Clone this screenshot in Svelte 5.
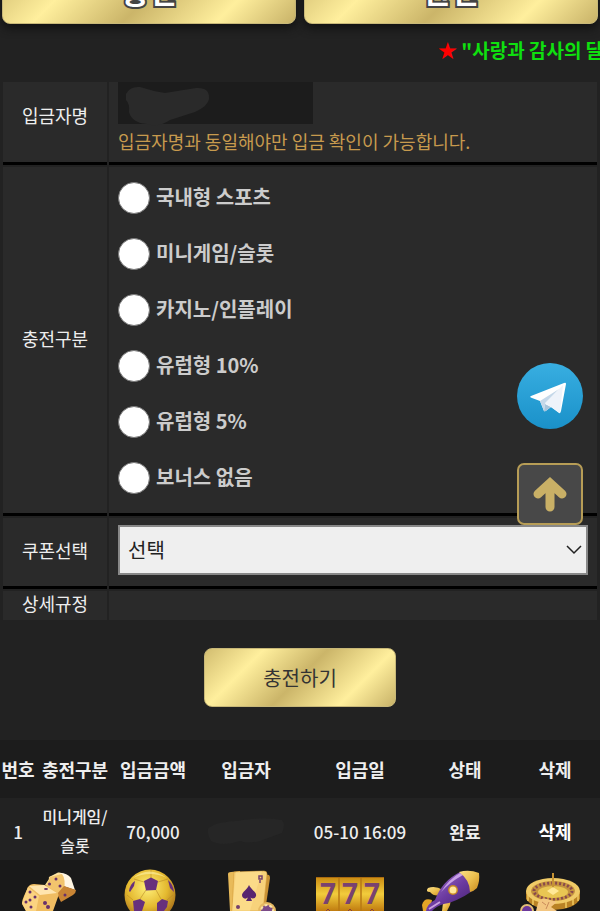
<script>
	const chargeTypes = [
		{ id: 'sports', label: '국내형 스포츠' },
		{ id: 'minigame', label: '미니게임/슬롯' },
		{ id: 'casino', label: '카지노/인플레이' },
		{ id: 'euro10', label: '유럽형 10%' },
		{ id: 'euro5', label: '유럽형 5%' },
		{ id: 'none', label: '보너스 없음' }
	];

	const columns = ['번호', '충전구분', '입금금액', '입금자', '입금일', '상태', '삭제'];

	const deposits = [
		{ no: 1, type: ['미니게임/', '슬롯'], amount: '70,000', date: '05-10 16:09', status: '완료' }
	];

	let chargeType = $state('');
	let coupon = $state('');

	function scrollTop() {
		window.scrollTo({ top: 0, behavior: 'smooth' });
	}
</script>

<main>
	<nav class="tabs">
		<button type="button" class="gold tab">충전</button>
		<button type="button" class="gold tab">환전</button>
	</nav>

	<div class="ticker"><span class="star">★</span> "사랑과 감사의 달"</div>

	<form onsubmit={(e) => e.preventDefault()}>
		<table class="form-table">
			<tbody>
				<tr class="depositor">
					<th><label for="depositor">입금자명</label></th>
					<td>
						<div class="name-box">
							<input id="depositor" type="text" readonly />
							<svg viewBox="0 0 195 46" aria-hidden="true">
								<path d="M8 12Q12 4 22 5Q34 9 47 11L78 6Q92 5 91 17Q90 24 77 30L52 38Q40 46 29 42Q14 41 11 30Q12 22 8 18Z" />
							</svg>
						</div>
						<p class="hint">입금자명과 동일해야만 입금 확인이 가능합니다.</p>
					</td>
				</tr>
				<tr>
					<th>충전구분</th>
					<td class="options">
						{#each chargeTypes as item}
							<label>
								<input type="radio" name="charge" value={item.id} bind:group={chargeType} />
								<span>{item.label}</span>
							</label>
						{/each}
					</td>
				</tr>
				<tr>
					<th><label for="coupon">쿠폰선택</label></th>
					<td class="coupon">
						<div class="select-box">
							<select id="coupon" bind:value={coupon}>
								<option value="">선택</option>
							</select>
							<svg viewBox="0 0 16 10" aria-hidden="true"><path d="M1 1L8 8L15 1" /></svg>
						</div>
					</td>
				</tr>
				<tr class="rules">
					<th>상세규정</th>
					<td></td>
				</tr>
			</tbody>
		</table>
		<button type="submit" class="gold submit">충전하기</button>
	</form>

	<table class="history">
		<thead>
			<tr>
				{#each columns as col}
					<th>{col}</th>
				{/each}
			</tr>
		</thead>
		<tbody>
			{#each deposits as row}
				<tr>
					<td>{row.no}</td>
					<td class="type">{row.type[0]}<br />{row.type[1]}</td>
					<td>{row.amount}</td>
					<td>
						<svg class="smudge" viewBox="0 0 80 28" aria-hidden="true">
							<path d="M2 12Q8 5 30 4Q58 -1 76 3Q80 8 76 16L54 24Q42 27 34 24Q16 30 5 24Q1 18 2 12Z" />
						</svg>
					</td>
					<td>{row.date}</td>
					<td class="strong">{row.status}</td>
					<td><button type="button" class="delete">삭제</button></td>
				</tr>
			{/each}
		</tbody>
	</table>

	<nav class="games">
		<svg viewBox="0 0 100 51" aria-hidden="true">
			<defs>
				<linearGradient id="goldFill" x1="0" y1="0" x2="1" y2="1">
					<stop offset="0" stop-color="#fbe08a" />
					<stop offset="0.5" stop-color="#ecc04f" />
					<stop offset="1" stop-color="#c98a1c" />
				</linearGradient>
				<linearGradient id="purpleFill" x1="0" y1="0" x2="1" y2="1">
					<stop offset="0" stop-color="#a77bd0" />
					<stop offset="0.5" stop-color="#6b3aa0" />
					<stop offset="1" stop-color="#3d1c66" />
				</linearGradient>
				<radialGradient id="ballFill" cx="0.45" cy="0.35" r="0.65">
					<stop offset="0" stop-color="#fff07a" />
					<stop offset="0.6" stop-color="#e4b92f" />
					<stop offset="1" stop-color="#a8701a" />
				</radialGradient>
				<linearGradient id="slotFill" x1="0" y1="0" x2="0" y2="1">
					<stop offset="0" stop-color="#c98a12" />
					<stop offset="0.5" stop-color="#f2cc3c" />
					<stop offset="1" stop-color="#c07c10" />
				</linearGradient>
			</defs>
			<path d="M49 19Q48 17 51 16L58 12.500Q61 12 64 14L69 18L59 29L45 25Z" fill="#ffe3a0" />
			<path d="M60 13Q67 13 71 18L75 30L63 26Q65 18 60 13Z" fill="#fff6e4" />
			<path d="M50 17L62 14Q66 19 64 31L57 34L46 26Z" fill="#f2c46d" />
			<path d="M64 26L76 30Q76 33 73 35L61 42L57 34Z" fill="#c98535" />
			<path d="M28 27Q30 24 34 24L45 25L58 33Q59 35 58 37L53 51H26L22 44Q22 40 24 36Z" fill="#f0bd62" />
			<path d="M29 26L44 25L57 33L40 35Z" fill="#ffe5af" />
			<path d="M28 27L39 36L36 51H26L22 43Z" fill="#fbd381" />
			<g fill="#68306b">
				<circle cx="56" cy="19" r="1.500" /><circle cx="49.500" cy="24" r="1.500" />
				<circle cx="60" cy="26" r="1.500" /><circle cx="65" cy="35" r="1.500" />
				<circle cx="30" cy="32" r="1.500" /><circle cx="35" cy="37" r="1.500" />
				<circle cx="30" cy="40" r="1.500" /><circle cx="26" cy="42" r="1.500" />
				<circle cx="31" cy="47" r="1.500" /><circle cx="45" cy="43" r="2" />
				<circle cx="48" cy="47" r="2" /><ellipse cx="46" cy="29" rx="2" ry="1" />
			</g>
		</svg>
		<svg viewBox="0 0 100 51" aria-hidden="true">
			<circle cx="50" cy="35" r="25.500" fill="url(#ballFill)" />
			<g fill="none" stroke="#b98a25" stroke-width="0.600">
				<path d="M51 18V10M44 22L34 19M58 22L68 19M46 30L40 39M56 30L61 39M33 40L27 35M67 40L73 35" />
			</g>
			<g fill="#67307c">
				<path d="M44 21L51 17.500L58 21L56 30L46 30.500Z" />
				<path d="M33 41L40 39L45 42L42 51H34Z" />
				<path d="M57 43L62 39L68 41L67 47L64 51H57Z" />
				<path d="M29 31Q30 24 35 21L34 26L30 32Z" />
				<path d="M68 20Q73 24 74 32L70 28Z" />
			</g>
			<path d="M33 18Q49 5 67 18Q50 10 33 18Z" fill="#fff3a6" opacity="0.600" />
		</svg>
		<svg viewBox="0 0 100 51" aria-hidden="true">
			<path d="M58 13L69 15Q70 16 70 18L66 45L55 50Z" fill="#c99235" />
			<path d="M28 14Q28 12 31 12L40 11L44 51H30Z" fill="#e8ba59" />
			<path d="M34 12L64 11Q67 11 67 14L63 51H32Z" fill="#f7d27b" stroke="#d59d3b" stroke-width="0.600" />
			<path d="M36 12L62 11L50 51H32Z" fill="#ffe396" opacity="0.500" />
			<path d="M49 25C52 31 57 32 56 36C55 39 52 39 50.500 37.500L52 41H46L48 37.500C45 40 42 38 42 35C42 32 47 30 49 25Z" fill="#57256f" />
			<g fill="none" stroke="#74406d" stroke-width="1.500">
				<rect x="59" y="16" width="3" height="3" /><path d="M60 20V23" />
			</g>
			<circle cx="38" cy="47" r="2" fill="#74406d" />
			<circle cx="67" cy="51" r="9" fill="#e5b862" />
			<circle cx="67" cy="51" r="6" fill="#7b4a87" stroke="#fae4aa" stroke-width="2" stroke-dasharray="3 2" />
		</svg>
		<svg viewBox="0 0 100 51" aria-hidden="true">
			<rect x="16" y="17" width="68" height="34" fill="url(#slotFill)" />
			<path d="M39 17V51M61 17V51" stroke="#b87914" stroke-width="1.500" />
			<path d="M16 17.500H84" stroke="#a96b10" />
			<g class="sevens">
				<text x="28" y="44">7</text>
				<text x="50" y="44">7</text>
				<text x="72" y="44">7</text>
			</g>
			<path d="M26 51L28 49L30 51M48 51L50 49L52 51M70 51L72 49L74 51" stroke="#8a3e3e" fill="none" />
		</svg>
		<svg viewBox="0 0 100 51" aria-hidden="true">
			<path d="M41 35Q34 37 30 32Q25 32 28 28Q35 25 43 30Z" fill="url(#goldFill)" />
			<path d="M32 40Q24 37 22 45L23 51H30Z" fill="#e3a526" />
			<path d="M43 43Q52 36 50 45L47 51H42Z" fill="url(#goldFill)" />
			<path d="M26 51Q27 44 35 40Q42 21 60 12L70 17L77 27Q66 37 49 43Q40 44 34 49L32 51Z" fill="url(#purpleFill)" />
			<path d="M41 32Q49 19 60 13L63 15Q50 22 41 32Z" fill="#c8a0e7" />
			<path d="M59 12Q69 9 79 13Q80 21 77 28Q74 31 70 32Q70 20 59 12Z" fill="url(#goldFill)" />
			<circle cx="53" cy="30" r="5" fill="#c58724" />
			<circle cx="53" cy="30" r="3.500" fill="#ffe59a" />
			<path d="M29 49L40 42" stroke="#c9a0de" stroke-width="2" />
		</svg>
		<svg viewBox="0 0 100 51" aria-hidden="true">
			<path d="M26 31V39Q33 49 53 50Q75 49 80 39V31Z" fill="#b98225" />
			<path d="M28 35V41M33 39V45M40 42V48M66 42V48M73 39V45M78 35V41" stroke="#e3b850" stroke-width="2" />
			<ellipse cx="53" cy="31" rx="27" ry="13" fill="#f0cb67" />
			<ellipse cx="53" cy="31" rx="22" ry="10" fill="#c4933f" />
			<ellipse cx="53" cy="31" rx="19" ry="8" fill="none" stroke="#8a4a4c" stroke-width="3" stroke-dasharray="2 2" />
			<ellipse cx="53" cy="32" rx="15" ry="6" fill="#e9c653" />
			<path d="M53 13V34" stroke="#c69334" stroke-width="2" />
			<path d="M47 31L53 27L59 31L53 35Z" fill="#ffe897" />
			<path d="M38 43Q41 37 47 39L57 42L51 47L57 51H36Z" fill="#f3c681" />
			<path d="M42 42L46 45M49 42L46 49" stroke="#c98a5a" />
			<circle cx="27" cy="51" r="6" fill="#6c379a" stroke="#e1bd76" stroke-width="2" />
		</svg>
	</nav>

	<aside class="floating">
		<a href="#telegram" aria-label="Telegram">
			<svg viewBox="0 0 66 66">
				<defs>
					<linearGradient id="tg" x1="0" y1="0" x2="0" y2="1">
						<stop offset="0" stop-color="#38aee1" />
						<stop offset="1" stop-color="#1a91c9" />
					</linearGradient>
				</defs>
				<circle cx="33" cy="33" r="33" fill="url(#tg)" />
				<path d="M14 33Q12 34 15 35L23 38L27 48Q28 49 30 47L34 44L42 50Q43 51 44 48L49 21Q49 19 47 20Z" fill="#fff" />
				<path d="M23 38L42 26L28 41L27 48Z" fill="#c5d8e9" />
				<path d="M28 41L27 48Q28 49 30 47L34 44Z" fill="#a8c4db" />
				<path d="M28 40L46 22L43 50L34 44Z" fill="#eef3fa" />
			</svg>
		</a>
		<button type="button" class="top" aria-label="맨 위로" onclick={scrollTop}>
			<svg viewBox="0 0 34 36"><path d="M17 31V8M5 18L17 7L29 18" /></svg>
		</button>
	</aside>
</main>

<style>
	:global(body) {
		margin: 0;
		background: #222;
	}

	main {
		display: flex;
		flex-direction: column;
		overflow: hidden;
		background: #222;
		color: #eee;
		font-family: 'Noto Sans CJK KR', sans-serif;
		font-size: 18px;
	}

	button,
	select,
	input {
		font-family: inherit;
		margin: 0;
	}

	.gold {
		border: 1px solid #c8b878;
		border-radius: 8px;
		background: linear-gradient(135deg, #d2bd70 0%, #ffef9d 24%, #cbb569 50%, #ffef9d 77%, #c8b268 100%);
		cursor: pointer;
	}

	/* the tab bar sits half above the scroll edge */
	.tabs {
		display: flex;
		gap: 8px;
		padding: 0 2px;
		margin-top: -32px;
	}

	.tab {
		flex: 1;
		height: 56px;
		padding: 0 0 12px;
		color: #fff;
		font-size: 30px;
		font-weight: 700;
		line-height: 42px;
		box-shadow: 0 4px 10px #111;
		-webkit-text-stroke: 4px #444;
		paint-order: stroke fill;
	}

	.ticker {
		height: 56px;
		padding-left: 73%;
		overflow: hidden;
		white-space: nowrap;
		color: #0fe00f;
		font-size: 19px;
		font-weight: 700;
		line-height: 52px;
	}

	.star {
		color: #f00;
	}

	form {
		display: flex;
		flex-direction: column;
		align-items: center;
	}

	.form-table {
		width: calc(100% - 2px);
		table-layout: fixed;
		border-collapse: separate;
		border-spacing: 2px;
	}

	.form-table th,
	.form-table td {
		background: #2a2a2a;
		border-bottom: 3px solid #000;
		padding: 0;
	}

	.form-table th {
		width: 104px;
		padding-bottom: 4px;
		font-weight: 400;
	}

	.form-table .depositor th {
		padding-bottom: 14px;
	}

	.form-table td {
		padding: 0 9px;
	}

	.name-box {
		position: relative;
		width: 195px;
		height: 42px;
	}

	.name-box input {
		box-sizing: border-box;
		width: 100%;
		height: 42px;
		border: 0;
		background: #1c1c1c;
		color: #eee;
	}

	.name-box svg {
		position: absolute;
		top: 0;
		left: 0;
		width: 195px;
		height: 46px;
		fill: #2a2a2a;
		pointer-events: none;
	}

	.hint {
		margin: 0;
		padding-bottom: 4px;
		color: #c79a4e;
		line-height: 34px;
	}

	.form-table .options {
		padding-top: 3px;
		padding-bottom: 7px;
	}

	.options label {
		display: flex;
		align-items: center;
		gap: 6px;
		height: 56px;
		color: #ccc;
		font-size: 20px;
		font-weight: 700;
	}

	.options span {
		padding-bottom: 4px;
	}

	.options input {
		appearance: none;
		width: 32px;
		height: 32px;
		border: 1px solid #777;
		border-radius: 50%;
		background: #fff;
	}

	.options input:checked {
		background: radial-gradient(#1a73e8 45%, #fff 50%);
	}

	.form-table .coupon {
		padding-top: 7px;
		padding-bottom: 11px;
	}

	.select-box {
		display: grid;
		align-items: center;
	}

	.select-box select,
	.select-box svg {
		grid-area: 1 / 1;
	}

	.select-box select {
		appearance: none;
		width: 100%;
		height: 50px;
		padding: 0 8px 2px;
		border: 2px solid #888;
		border-radius: 0;
		background: #efefef;
		color: #222;
		font-size: 20px;
	}

	.select-box svg {
		justify-self: end;
		width: 16px;
		height: 10px;
		margin-right: 6px;
		fill: none;
		stroke: #222;
		stroke-width: 1.5;
		pointer-events: none;
	}

	.form-table .rules th,
	.form-table .rules td {
		height: 25px;
		border-bottom: 0;
		padding-bottom: 4px;
		line-height: 25px;
	}

	.submit {
		width: 192px;
		height: 59px;
		margin: 26px 0 33px;
		color: #333;
		font-size: 20px;
	}

	.history {
		width: 100%;
		table-layout: fixed;
		border-collapse: collapse;
		text-align: center;
	}

	.history th {
		height: 58px;
		padding: 0;
		background: #1c1c1c;
		font-weight: 700;
		white-space: nowrap;
	}

	.history th:nth-child(1) {
		width: 6%;
	}

	.history th:nth-child(2),
	.history th:nth-child(3) {
		width: 13%;
	}

	.history th:nth-child(4) {
		width: 18%;
	}

	.history th:nth-child(5) {
		width: 20%;
	}

	.history th:nth-child(6),
	.history th:nth-child(7) {
		width: 15%;
	}

	.history td {
		height: 58px;
		padding: 4px 0 0;
		background: #222;
		font-size: 17px;
		font-weight: 500;
		line-height: 29px;
		white-space: nowrap;
	}

	.history .type {
		font-size: 16px;
	}

	.history .strong {
		font-weight: 700;
	}

	.smudge {
		display: block;
		width: 80px;
		height: 28px;
		margin: 0 auto;
		fill: #262626;
	}

	.delete {
		padding: 0;
		border: 0;
		background: none;
		color: #fff;
		font-size: 18px;
		font-weight: 700;
		cursor: pointer;
	}

	.games {
		display: grid;
		grid-template-columns: repeat(6, 1fr);
		justify-items: center;
		background: #191919;
	}

	.games svg {
		display: block;
		width: 100px;
		height: 51px;
	}

	.sevens {
		fill: #794270;
		font-family: 'Open Sans', sans-serif;
		font-size: 28px;
		font-weight: 700;
		text-anchor: middle;
	}

	.floating {
		position: fixed;
		top: 363px;
		right: 17px;
		display: flex;
		flex-direction: column;
		gap: 34px;
	}

	.floating a,
	.floating a svg {
		display: block;
		width: 66px;
		height: 66px;
	}

	.top {
		display: flex;
		align-items: center;
		justify-content: center;
		width: 66px;
		height: 62px;
		padding: 0;
		border: 2px solid #b79d56;
		border-radius: 7px;
		background: #484848;
		cursor: pointer;
	}

	.top svg {
		width: 34px;
		height: 36px;
		fill: none;
		stroke: #c9b066;
		stroke-width: 9;
		stroke-linecap: round;
	}
</style>
